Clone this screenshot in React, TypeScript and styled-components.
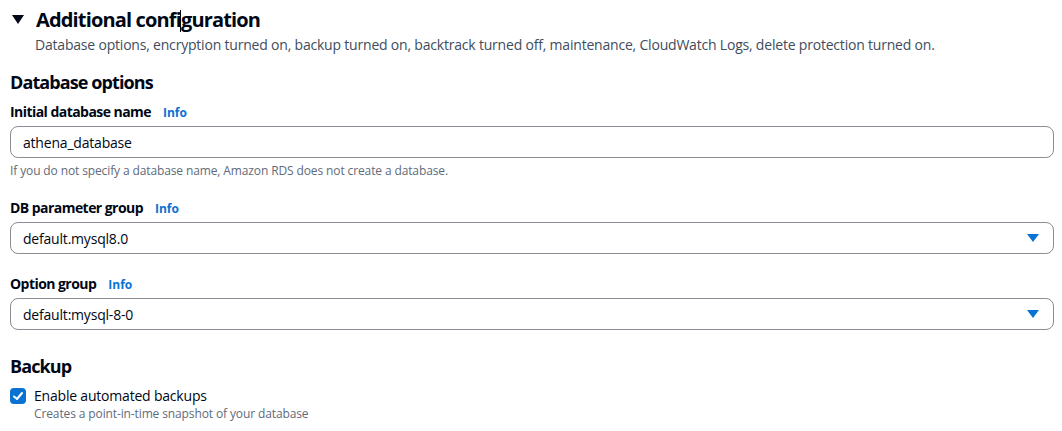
import React from "react";
import styled, { createGlobalStyle } from "styled-components";

const Global = createGlobalStyle`
  html, body { margin: 0; padding: 0; background: #ffffff; }
  body { font-family: "Open Sans", "Noto Sans", sans-serif; color: #000716; }
`;

const Page = styled.div`
  width: 1062px;
  height: 431px;
  overflow: hidden;
  box-sizing: border-box;
  padding: 8px 8px 0 10px;
  display: flex;
  flex-direction: column;
`;

const Header = styled.div`
  display: flex;
  flex-direction: column;
  gap: 3px;
`;

const TitleRow = styled.div`
  display: flex;
  align-items: center;
  gap: 12px;
  padding-left: 2px;
`;

const Title = styled.h2`
  margin: 0;
  font-size: 20px;
  font-weight: 700;
  line-height: 24px;
  letter-spacing: -0.85px;
  color: #000716;
`;

const Cursor = styled.span`
  display: inline-block;
  width: 1px;
  height: 22px;
  margin: 0 -0.5px;
  vertical-align: -5px;
  background: #000716;
`;

const Description = styled.p`
  margin: 0;
  padding-left: 25px;
  font-size: 14px;
  line-height: 20px;
  letter-spacing: -0.2px;
  color: #414d5c;
`;

const SectionTitle = styled.h3<{ $top: number }>`
  margin: ${(p) => p.$top}px 0 0 0;
  font-size: 18px;
  font-weight: 700;
  line-height: 22px;
  letter-spacing: -0.9px;
  color: #000716;
`;

const Field = styled.div<{ $top: number }>`
  margin-top: ${(p) => p.$top}px;
  display: flex;
  flex-direction: column;
`;

const LabelRow = styled.div`
  display: flex;
  align-items: baseline;
  gap: 12px;
  height: 22px;
  margin-bottom: 3px;
`;

const Label = styled.span`
  font-size: 14px;
  font-weight: 700;
  line-height: 22px;
  letter-spacing: -0.55px;
  color: #000716;
`;

const Info = styled.span`
  font-size: 12px;
  font-weight: 700;
  color: #0972d3;
`;

const Box = styled.div`
  height: 32px;
  box-sizing: border-box;
  border: 1px solid #8c8c94;
  border-radius: 8px;
  display: flex;
  align-items: center;
  justify-content: space-between;
  padding: 0 14px 0 12px;
  font-size: 14px;
  letter-spacing: -0.2px;
  color: #000716;
`;

const Helper = styled.span`
  margin-top: 5px;
  font-size: 12px;
  line-height: 16px;
  letter-spacing: -0.12px;
  color: #5f6b7a;
`;

const CheckRow = styled.div`
  margin-top: 9px;
  display: flex;
  gap: 8px;
  align-items: flex-start;
`;

const CheckBox = styled.span`
  width: 16px;
  height: 16px;
  margin-top: 2px;
  border-radius: 4px;
  background: #0972d3;
  display: flex;
  align-items: center;
  justify-content: center;
`;

const CheckText = styled.div`
  display: flex;
  flex-direction: column;
`;

const CheckLabel = styled.span`
  font-size: 14px;
  line-height: 20px;
  letter-spacing: -0.2px;
  color: #000716;
`;

const CheckDesc = styled.span`
  font-size: 12px;
  line-height: 16px;
  letter-spacing: -0.12px;
  color: #5f6b7a;
`;

const Caret = () => (
  <svg width="12" height="10" viewBox="0 0 12 10">
    <polygon points="0,0 12,0 6,9" fill="#000716" />
  </svg>
);

const SelectCaret = () => (
  <svg width="12" height="9" viewBox="0 0 12 9">
    <polygon points="0,0 12,0 6,8" fill="#0972d3" />
  </svg>
);

const Check = () => (
  <svg width="12" height="12" viewBox="0 0 12 12">
    <polyline points="2,6.5 5,9 10,3" fill="none" stroke="#ffffff" strokeWidth="2" strokeLinecap="round" strokeLinejoin="round" />
  </svg>
);

export default function App() {
  return (
    <>
      <Global />
      <Page>
        <Header>
          <TitleRow>
            <Caret />
            <Title>
              Additional confi
              <Cursor />
              guration
            </Title>
          </TitleRow>
          <Description>
            Database options, encryption turned on, backup turned on, backtrack turned off, maintenance, CloudWatch Logs, delete protection turned on.
          </Description>
        </Header>

        <SectionTitle $top={16}>Database options</SectionTitle>

        <Field $top={8}>
          <LabelRow>
            <Label>Initial database name</Label>
            <Info>Info</Info>
          </LabelRow>
          <Box>athena_database</Box>
          <Helper>If you do not specify a database name, Amazon RDS does not create a database.</Helper>
        </Field>

        <Field $top={18}>
          <LabelRow>
            <Label>DB parameter group</Label>
            <Info>Info</Info>
          </LabelRow>
          <Box>
            default.mysql8.0
            <SelectCaret />
          </Box>
        </Field>

        <Field $top={19}>
          <LabelRow>
            <Label>Option group</Label>
            <Info>Info</Info>
          </LabelRow>
          <Box>
            default:mysql-8-0
            <SelectCaret />
          </Box>
        </Field>

        <SectionTitle $top={25}>Backup</SectionTitle>

        <CheckRow>
          <CheckBox>
            <Check />
          </CheckBox>
          <CheckText>
            <CheckLabel>Enable automated backups</CheckLabel>
            <CheckDesc>Creates a point-in-time snapshot of your database</CheckDesc>
          </CheckText>
        </CheckRow>
      </Page>
    </>
  );
}
